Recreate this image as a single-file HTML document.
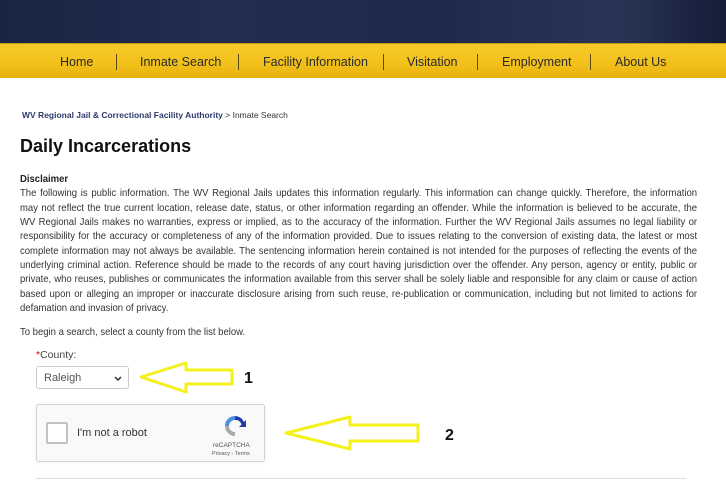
<!DOCTYPE html>
<html><head><meta charset="utf-8"><style>
*{margin:0;padding:0;box-sizing:border-box}
body{width:726px;height:480px;overflow:hidden;background:#fff;font-family:"Liberation Sans",Arial,sans-serif;color:#222;position:relative}
.hdr{position:absolute;left:0;top:0;width:726px;height:43px;background:linear-gradient(90deg,#1a2443 0%,#222d50 30%,#1e2a4c 60%,#2a3556 85%,#141c38 100%)}
.nav{position:absolute;left:0;top:43px;width:726px;height:35px;background:linear-gradient(#f6c92a,#f3c01a 60%,#e7b00f);border-top:1px solid #c49a10}
.nav span{position:absolute;top:11px;font-size:12.5px;color:#2a2a2a}
.nav i{position:absolute;top:10px;width:1px;height:16px;background:#5a4a10}
.bc{position:absolute;left:22px;top:110px;font-size:8.5px;color:#333}
.bc b{color:#2d3a6b;font-weight:bold}
h1{position:absolute;left:20px;top:136px;font-size:18px;font-weight:bold;color:#111}
.disc{position:absolute;left:20px;top:173px;width:740px;font-size:10.4px;line-height:14.35px;color:#333;transform:scaleX(0.915);transform-origin:0 0}
.disc div{white-space:nowrap}
.disc div.j{text-align:justify;text-align-last:justify}
.lbl{position:absolute;left:36px;top:349px;font-size:10.5px;color:#444}
.lbl em{color:#c00;font-style:normal}
.sel{position:absolute;left:36px;top:366px;width:93px;height:23px;border:1px solid #ccc;border-radius:3px;font-size:11px;color:#555;padding:5px 0 0 7px}
.cap{position:absolute;left:36px;top:404px;width:229px;height:58px;border:1px solid #d3d3d3;border-radius:3px;background:#f9f9f9;box-shadow:0 0 3px rgba(0,0,0,.08)}
.cb{position:absolute;left:9px;top:17px;width:22px;height:22px;border:2px solid #c1c1c1;border-radius:2px;background:#fff}
.cap .t{position:absolute;left:40px;top:22px;font-size:11px;color:#333}
.hr{position:absolute;left:36px;top:478px;width:650px;height:1px;background:#ddd}
</style></head><body>
<div class="hdr"></div>
<div class="nav">
<span style="left:60px">Home</span><i style="left:116px"></i>
<span style="left:140px">Inmate Search</span><i style="left:238px"></i>
<span style="left:263px">Facility Information</span><i style="left:383px"></i>
<span style="left:407px">Visitation</span><i style="left:477px"></i>
<span style="left:502px">Employment</span><i style="left:590px"></i>
<span style="left:615px">About Us</span>
</div>
<div class="bc"><b>WV Regional Jail &amp; Correctional Facility Authority</b> &gt; Inmate Search</div>
<h1>Daily Incarcerations</h1>
<div class="disc">
<div style="font-weight:bold;color:#222">Disclaimer</div>
<div class="j">The following is public information. The WV Regional Jails updates this information regularly. This information can change quickly. Therefore, the information</div>
<div class="j">may not reflect the true current location, release date, status, or other information regarding an offender. While the information is believed to be accurate, the</div>
<div class="j">WV Regional Jails makes no warranties, express or implied, as to the accuracy of the information. Further the WV Regional Jails assumes no legal liability or</div>
<div class="j">responsibility for the accuracy or completeness of any of the information provided. Due to issues relating to the conversion of existing data, the latest or most</div>
<div class="j">complete information may not always be available. The sentencing information herein contained is not intended for the purposes of reflecting the events of the</div>
<div class="j">underlying criminal action. Reference should be made to the records of any court having jurisdiction over the offender. Any person, agency or entity, public or</div>
<div class="j">private, who reuses, publishes or communicates the information available from this server shall be solely liable and responsible for any claim or cause of action</div>
<div class="j">based upon or alleging an improper or inaccurate disclosure arising from such reuse, re-publication or communication, including but not limited to actions for</div>
<div>defamation and invasion of privacy.</div>
<div style="margin-top:10px">To begin a search, select a county from the list below.</div>
</div>
<div class="lbl"><em>*</em>County:</div>
<div class="sel">Raleigh<svg style="position:absolute;right:6px;top:9px" width="8" height="5" viewBox="0 0 8 5"><path d="M1 1l3 3 3-3" fill="none" stroke="#333" stroke-width="1.5"/></svg></div>
<div class="cap"><div class="cb"></div><div class="t">I'm not a robot</div>
<svg style="position:absolute;left:185px;top:8px" width="26" height="26" viewBox="0 0 26 26">
<path d="M13 3a10 10 0 0 1 9 6l2-2v7h-7l2.5-2.5A6 6 0 0 0 13 7z" fill="#1c3aa9"/>
<path d="M13 3a10 10 0 0 0-10 10h4a6 6 0 0 1 6-6z" fill="#4a90e2"/>
<path d="M3 13a10 10 0 0 0 10 10v-4a6 6 0 0 1-6-6z" fill="#aaa"/>
</svg>
<div style="position:absolute;left:176px;top:37px;font-size:6.5px;color:#555">reCAPTCHA</div>
<div style="position:absolute;left:175px;top:46px;font-size:5.5px;color:#555">Privacy - Terms</div>
</div>
<div class="hr"></div>
<svg style="position:absolute;left:0;top:0" width="726" height="480">
<path d="M141 377L186 363V370H232V384H186V392Z" fill="none" stroke="#f4f01c" stroke-width="3" stroke-linejoin="round"/>
<path d="M286 433L350 417V425H418V441H350V449Z" fill="none" stroke="#f4f01c" stroke-width="3" stroke-linejoin="round"/>
<text x="244" y="383" font-family="Liberation Sans" font-weight="bold" font-size="16" fill="#111">1</text>
<text x="445" y="440" font-family="Liberation Sans" font-weight="bold" font-size="16" fill="#111">2</text>
</svg>
</body></html>
